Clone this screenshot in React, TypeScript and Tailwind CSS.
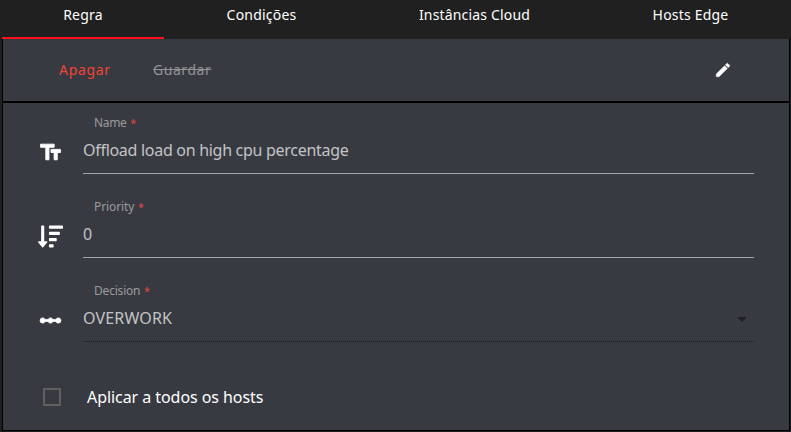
import type { ReactNode } from "react";
import { MdEdit, MdLinearScale, MdTextFields } from "react-icons/md";
import { FaSortAmountDown } from "react-icons/fa";

function Tab({ width, active, children }: { width: string; active?: boolean; children: ReactNode }) {
  return (
    <button className={`h-[39px] shrink-0 pb-[7px] text-center text-[14px] leading-5 text-white ${width} ${active ? "border-b-2 border-[#ff0f1c]" : "border-b-2 border-transparent"}`}>
      {children}
    </button>
  );
}

function Field({ label, icon, value, dotted, arrow }: { label: ReactNode; icon: ReactNode; value: ReactNode; dotted?: boolean; arrow?: boolean }) {
  return (
    <div className="flex h-[84px]">
      <div className="flex w-[80px] items-start pl-[35px] pt-[36px] text-white">{icon}</div>
      <div className="w-[671px]">
        <div className="h-[26px] pl-[11px] pt-[12px] text-[12px] leading-4 text-[#9b9b9d]">{label}</div>
        <div className={`flex h-[45px] items-start justify-between border-b pt-[9px] text-[16px] leading-6 text-[#c3c4c6] ${dotted ? "border-dotted border-[#191a1c]" : "border-solid border-[#a3a4a6]"}`}>
          {value}
          {arrow && <span className="mr-[7px] mt-[11px] h-0 w-0 border-x-[5px] border-t-[5px] border-x-transparent border-t-[#202124]" />}
        </div>
      </div>
    </div>
  );
}

function Required({ text, tracking }: { text: string; tracking: string }) {
  return (
    <span className="flex">
      <span className={tracking}>{text}</span>
      <span className="ml-[4px] text-[10px] font-bold text-[#d04245]">*</span>
    </span>
  );
}

export default function App() {
  return (
    <div className="h-[432px] w-[791px] overflow-hidden bg-[#202020] font-['Noto_Sans',sans-serif]">
      <nav className="flex h-[39px] pl-[2px]">
        <Tab width="w-[162px]" active><span className="tracking-[0.2px]">Regra</span></Tab>
        <Tab width="w-[195px]"><span className="tracking-[0.2px]">Condições</span></Tab>
        <Tab width="w-[231px]"><span className="tracking-[0.17px]">Instâncias Cloud</span></Tab>
        <Tab width="w-[201px]"><span className="tracking-[0.2px]">Hosts Edge</span></Tab>
      </nav>
      <main className="ml-[2px] h-[392px] w-[788px] border-x border-b border-black bg-[#373a41]">
        <div className="flex h-[64px] items-center border-b-2 border-black pl-[56px] text-[14px]">
          <button className="w-[94px] pb-[2px] text-left tracking-[0.7px] text-[#f44336]">Apagar</button>
          <button className="pb-[2px] text-left tracking-[0.55px] text-[#929395] line-through">Guardar</button>
          <MdEdit className="ml-auto mr-[57px] size-[18px] stroke-white stroke-[0.5px] text-white [&>path[fill=none]]:stroke-none" />
        </div>
        <Field
          label={<Required text="Name" tracking="tracking-[-0.35px]" />}
          icon={<MdTextFields className="mt-px size-[25px] stroke-white stroke-[0.9px] [&>path[fill=none]]:stroke-none" />}
          value={<span className="tracking-[-0.29px]">Offload load on high cpu percentage</span>}
        />
        <Field
          label={<Required text="Priority" tracking="tracking-[-0.1px]" />}
          icon={<FaSortAmountDown className="mt-px size-[25px]" />}
          value={<span>0</span>}
        />
        <Field
          dotted
          arrow
          label={<Required text="Decision" tracking="tracking-[-0.2px]" />}
          icon={<MdLinearScale className="mt-[0.5px] size-[25px] stroke-white stroke-[0.7px] [&>path[fill=none]]:stroke-none" />}
          value={<span className="tracking-[0.15px]">OVERWORK</span>}
        />
        <label className="flex h-[84px] items-center pl-[40px] text-[16px] text-white">
          <span className="mr-[26px] size-[18px] rounded-[1px] border-2 border-[#62605f]" />
          <span className="tracking-[-0.06px]">Aplicar a todos os hosts</span>
        </label>
      </main>
    </div>
  );
}
